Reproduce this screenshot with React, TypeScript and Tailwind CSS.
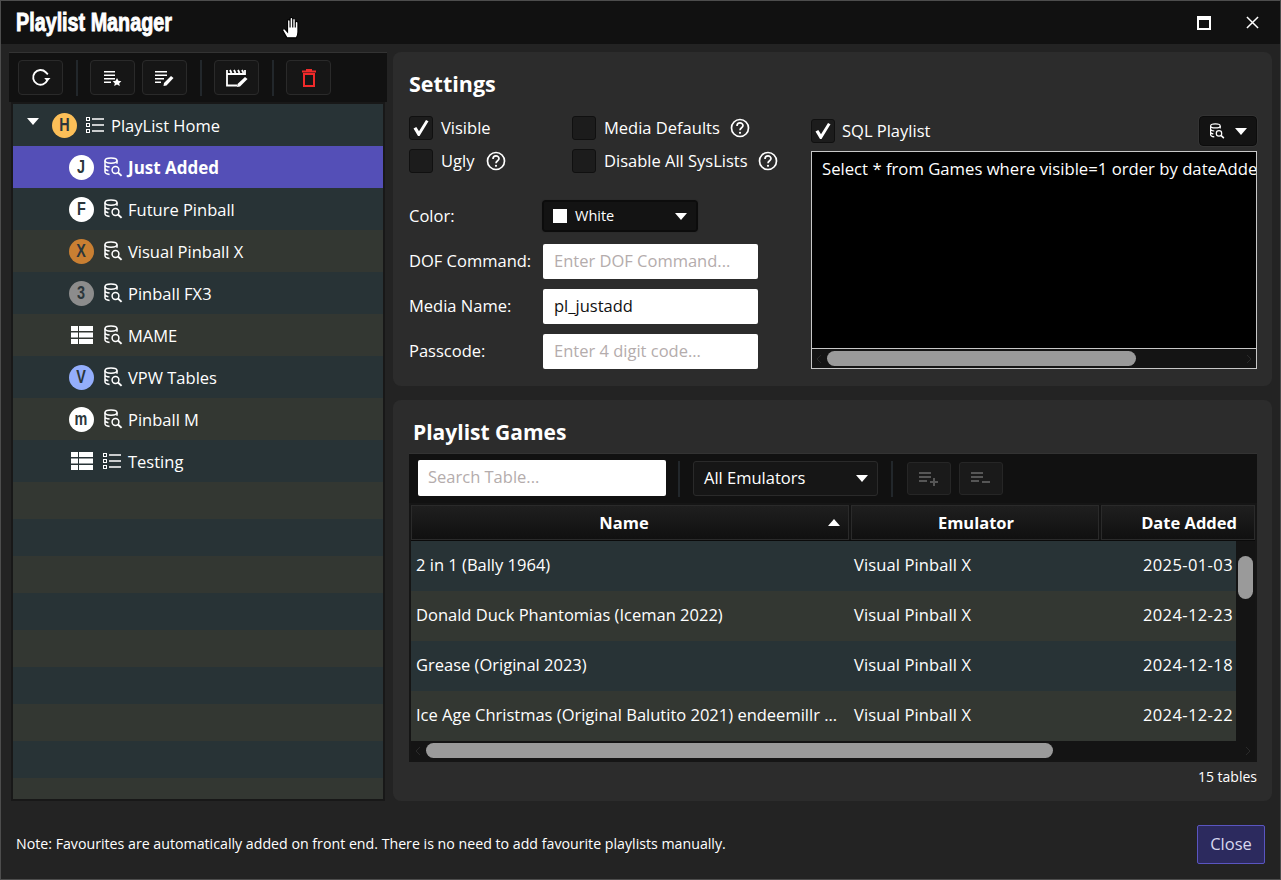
import React from 'react';

const DbSearch: React.FC<{ className?: string }> = ({ className = 'w-[20px] h-[20px]' }) => (
  <svg viewBox="0 0 20 20" fill="none" stroke="currentColor" strokeWidth="1.5" className={className}>
    <ellipse cx="8" cy="3.6" rx="6" ry="2.6" />
    <path d="M2 3.6v11.2c0 1.4 2 2.4 4.6 2.6M14 3.6v3.2M2 7.5c0 1.4 2.2 2.4 4.6 2.5M2 11.3c0 1.2 1.6 2.1 3.4 2.4" />
    <circle cx="12.5" cy="13" r="3.4" />
    <path d="M15 15.5l3.6 3.4" strokeWidth="1.9" />
  </svg>
);

const ListBoxes: React.FC = () => (
  <svg viewBox="0 0 18 16" fill="none" stroke="currentColor" className="w-[18px] h-[16px]">
    <rect x="0.5" y="0.5" width="3" height="3" />
    <rect x="0.5" y="6.5" width="3" height="3" />
    <rect x="0.5" y="12.5" width="3" height="3" />
    <path d="M6 2h12M6 8h12M6 14h12" strokeWidth="1.6" />
  </svg>
);

const TableIcon: React.FC = () => (
  <svg viewBox="0 0 22 18" fill="currentColor" className="w-[22px] h-[18px]">
    <path d="M0 0h7v5H0zM8 0h14v5H8zM0 6.500h7v5H0zM8 6.500h14v5H8zM0 13h7v5H0zM8 13h14v5H8z" />
  </svg>
);

const Caret: React.FC<{ className?: string }> = ({ className = '' }) => (
  <svg viewBox="0 0 12 7" fill="currentColor" className={`w-[12px] h-[7px] ${className}`}>
    <path d="M0 0h12L6 7z" />
  </svg>
);

const Help: React.FC<{ className?: string }> = ({ className = 'ml-[2px]' }) => (
  <svg viewBox="0 0 20 20" fill="none" stroke="currentColor" className={`w-[20px] h-[20px] shrink-0 ${className}`}>
    <circle cx="10" cy="10" r="8.500" strokeWidth="1.700" />
    <path d="M7 8c0-4 6-4 6-.4 0 2.300-3 2-3 4.600" strokeWidth="1.700" />
    <circle cx="10" cy="14.800" r="1.100" fill="currentColor" stroke="none" />
  </svg>
);

const Check: React.FC<{ checked?: boolean }> = ({ checked }) => (
  <span className="w-[24px] h-[24px] rounded-[3px] bg-[#1c1c1c] border border-[#101010] flex items-center justify-center shrink-0">
    {checked && (
      <svg viewBox="0 0 18 18" fill="#fff" className="w-[18px] h-[18px]">
        <path d="M1.500 9.500l2.800-1.500 2.700 4.200L14 1l2.500 1.200L7.500 17h-1.500z" />
      </svg>
    )}
  </span>
);

const Field: React.FC<{ label: string; placeholder?: string; value?: string }> = ({ label, placeholder, value }) => (
  <div className="flex items-center h-[35px]">
    <span className="w-[134px] text-[16.500px]">{label}</span>
    <div className={`w-[215px] h-[35px] bg-white rounded-[2px] px-[11px] flex items-center text-[16.500px] ${value ? 'text-[#111]' : 'text-[#b4acac]'}`}>
      {value ?? placeholder}
    </div>
  </div>
);

const ToolButton: React.FC<{ children: React.ReactNode }> = ({ children }) => (
  <button className="w-[45px] h-[35px] rounded-[4px] bg-[#161616] border border-[#2a2a2a] flex items-center justify-center text-white">
    {children}
  </button>
);

const Sep: React.FC<{ className?: string }> = ({ className = 'ml-[13px] mr-[12px]' }) => (
  <span className={`w-[2px] h-[36px] bg-[#22272b] shrink-0 ${className}`} />
);

const HBar: React.FC<{ thumbLeft: number; thumbWidth: number; className?: string }> = ({ thumbLeft, thumbWidth, className = '' }) => (
  <div className={`h-[19px] bg-[#141414] flex items-center relative ${className}`}>
    <svg viewBox="0 0 6 10" fill="none" stroke="#2a2a2a" className="absolute left-[4px] w-[6px] h-[10px]"><path d="M5 1L1 5l4 4" /></svg>
    <div className="h-[15px] rounded-full bg-[#9a9a9a]" style={{ marginLeft: thumbLeft, width: thumbWidth }} />
    <svg viewBox="0 0 6 10" fill="none" stroke="#2a2a2a" className="absolute right-[4px] w-[6px] h-[10px]"><path d="M1 1l4 4-4 4" /></svg>
  </div>
);

interface TreeItem {
  name: string;
  badge: string | null;
  color: string;
  plain?: boolean;
}

const items: TreeItem[] = [
  { name: 'Future Pinball', badge: 'F', color: 'bg-white' },
  { name: 'Visual Pinball X', badge: 'X', color: 'bg-[#c97f32]' },
  { name: 'Pinball FX3', badge: '3', color: 'bg-[#8c8c8c]' },
  { name: 'MAME', badge: null, color: '' },
  { name: 'VPW Tables', badge: 'V', color: 'bg-[#94aefc]' },
  { name: 'Pinball M', badge: 'm', color: 'bg-white' },
  { name: 'Testing', badge: null, color: '', plain: true },
];

const games = [
  ['2 in 1 (Bally 1964)', '2025-01-03'],
  ['Donald Duck Phantomias (Iceman 2022)', '2024-12-23'],
  ['Grease (Original 2023)', '2024-12-18'],
  ['Ice Age Christmas (Original Balutito 2021) endeemillr ...', '2024-12-22'],
];

const Badge: React.FC<{ letter: string; color: string }> = ({ letter, color }) => (
  <span className={`w-[25px] h-[25px] rounded-full flex items-center justify-center text-[#2b363b] text-[18px] font-bold font-['Liberation_Sans',sans-serif] shrink-0 ${color}`}>
    <span className="scale-x-[0.8]">{letter}</span>
  </span>
);

const App: React.FC = () => {
  return (
    <div className="w-[1281px] h-[880px] relative overflow-hidden bg-[#232323] border border-[#4d4d4d] text-white font-['Open_Sans',sans-serif] flex flex-col">
      {/* title bar */}
      <div className="h-[43px] bg-[#111111] flex items-center shrink-0 pl-[15px]">
        <span className="font-['Liberation_Sans',sans-serif] font-bold text-[25px] [-webkit-text-stroke:0.9px_white] origin-left scale-x-[0.79] whitespace-nowrap">Playlist Manager</span>
        <div className="ml-auto flex items-center">
          <span className="w-[14px] h-[14px] border-2 border-white border-t-[4px] mr-[35px]" />
          <svg viewBox="0 0 14 14" stroke="#fff" strokeWidth="1.600" className="w-[13px] h-[13px] mr-[21px]">
            <path d="M1 1l12 12M13 1L1 13" />
          </svg>
        </div>
      </div>

      <svg viewBox="3 2 15 19" fill="#fff" stroke="#000" strokeWidth="1" className="absolute left-[281px] top-[16px] w-[18px] h-[22px]">
        <path d="M7 20L3.500 14c-.8-1.400 1-2.500 2-1.300L7.500 15V5.500c0-1.600 2.200-1.600 2.200 0V11V3.500c0-1.600 2.300-1.600 2.300 0V11V4.500c0-1.600 2.200-1.600 2.200 0V11V7c0-1.600 2.300-1.600 2.300 0v8c0 3-1 4-1.500 5z" />
      </svg>

      <div className="flex h-[758px] pt-[8px] shrink-0">
        {/* left column */}
        <div className="w-[378px] ml-[8px] flex flex-col shrink-0">
          <div className="h-[50px] bg-[#111111] border-t border-[#333333] flex items-center pl-[9px] shrink-0">
            <ToolButton>
              <svg viewBox="0 0 20 20" fill="none" stroke="currentColor" strokeWidth="1.800" className="w-[21px] h-[21px]">
                <path d="M16.500 12.500a7 7 0 1 1-1.500-7.500l2 2" />
                <path d="M13.500 10.500h6l-3 3.300z" fill="currentColor" stroke="none" />
              </svg>
            </ToolButton>
            <Sep />
            <ToolButton>
              <svg viewBox="0 0 18 16" fill="currentColor" className="w-[18px] h-[16px]">
                <path d="M0 1h11v1.500H0zM0 4.500h11V6H0zM0 8h11v1.500H0zM0 11.500h7V13H0z" />
                <path d="M13 8l1.400 2.800 3 .4-2.200 2 .6 2.800-2.800-1.500-2.800 1.500.6-2.800-2.200-2 3-.4z" />
              </svg>
            </ToolButton>
            <span className="w-[7px]" />
            <ToolButton>
              <svg viewBox="0 0 20 16" fill="currentColor" className="w-[20px] h-[16px]">
                <path d="M0 1h12v1.500H0zM0 4.500h12V6H0zM0 8h9v1.500H0zM0 11.500h6V13H0z" />
                <path d="M16 6l2.500 2-7 7.500-3 .5.500-3z" />
              </svg>
            </ToolButton>
            <Sep />
            <ToolButton>
              <svg viewBox="0 0 22 18" fill="none" stroke="currentColor" className="w-[22px] h-[18px]">
                <path d="M1 1v15.500h10M1 5h18V1" strokeWidth="1.800" />
                <path d="M4 1l1.500 3M8 1l1.500 3M12 1l1.500 3M16 1l1.500 3" strokeWidth="1.800" />
                <path d="M19 8l2.500 2-7.500 7.500-3 .5.500-3z" fill="currentColor" stroke="none" />
              </svg>
            </ToolButton>
            <Sep />
            <ToolButton>
              <svg viewBox="0 0 14 18" fill="none" stroke="#f02a2a" strokeWidth="2" className="w-[14px] h-[18px]">
                <path d="M0 2.500h14M4 1h6" />
                <path d="M2 5h10v12H2z" />
              </svg>
            </ToolButton>
          </div>

          <div className="h-[699px] mx-[2px] bg-[#1a1a1a] border-2 border-[#181818] flex flex-col overflow-hidden">
            <div className="h-[42px] bg-[#283336] flex items-center pl-[14px] text-[16.500px] shrink-0">
              <Caret className="mb-[8px]" />
              <span className="w-[13px]" />
              <Badge letter="H" color="bg-[#fcbf58]" />
              <span className="w-[9px]" />
              <ListBoxes />
              <span className="w-[7px]" />
              <span className="pt-[2px]">PlayList Home</span>
            </div>
            <div className="h-[42px] bg-[#544fb7] flex items-center pl-[56px] text-[17px] font-bold shrink-0">
              <Badge letter="J" color="bg-white" />
              <span className="w-[9px]" />
              <DbSearch />
              <span className="w-[5px]" />
              <span className="pt-[2px]">Just Added</span>
            </div>
            {items.map((it, i) => (
              <div key={it.name} className={`h-[42px] flex items-center pl-[56px] text-[16.500px] shrink-0 ${i % 2 === 0 ? 'bg-[#283336]' : 'bg-[#333732]'}`}>
                {it.badge ? <Badge letter={it.badge} color={it.color} /> : <span className="w-[25px] flex justify-center"><TableIcon /></span>}
                <span className="w-[9px]" />
                {it.plain ? <ListBoxes /> : <DbSearch />}
                <span className={it.plain ? 'w-[7px]' : 'w-[5px]'} />
                <span className="pt-[2px]">{it.name}</span>
              </div>
            ))}
            {[0, 1, 2, 3, 4, 5, 6, 7, 8].map((i) => (
              <div key={i} className={`h-[37px] shrink-0 ${i % 2 === 0 ? 'bg-[#333732]' : 'bg-[#283336]'}`} />
            ))}
          </div>
        </div>

        {/* right column */}
        <div className="w-[879px] ml-[6px] flex flex-col gap-[14px] shrink-0">
          <section className="h-[334px] rounded-[8px] bg-[#2c2c2c] pl-[16px] pr-[15px] pt-[16px] flex gap-[32px]">
            <div className="w-[370px] shrink-0">
              <h2 className="text-[21.500px] font-bold leading-[30px] pt-[1px] h-[30px]">Settings</h2>
              <div className="mt-[18px] flex flex-col gap-[9px] text-[16.500px]">
                <div className="flex items-center h-[24px]">
                  <div className="w-[163px] flex items-center gap-[8px]"><Check checked />Visible</div>
                  <div className="flex items-center gap-[8px] whitespace-nowrap"><Check />Media Defaults<Help /></div>
                </div>
                <div className="flex items-center h-[24px]">
                  <div className="w-[163px] flex items-center gap-[8px]"><Check />Ugly<Help className="ml-[4px]" /></div>
                  <div className="flex items-center gap-[8px] whitespace-nowrap"><Check />Disable All SysLists<Help /></div>
                </div>
              </div>
              <div className="flex items-center h-[32px] mt-[27px]">
                <span className="w-[133px] text-[16.500px]">Color:</span>
                <div className="w-[156px] h-[32px] rounded-[3px] bg-[#131313] border-2 border-[#0c0c0c] outline outline-[#2a2a2a] flex items-center pl-[9px] pr-[8px] text-[14.500px]">
                  <span className="w-[14px] h-[14px] bg-white mr-[8px]" />
                  White
                  <Caret className="ml-auto mr-[1px]" />
                </div>
              </div>
              <div className="mt-[12px] flex flex-col gap-[10px]">
                <Field label="DOF Command:" placeholder="Enter DOF Command..." />
                <Field label="Media Name:" value="pl_justadd" />
                <Field label="Passcode:" placeholder="Enter 4 digit code..." />
              </div>
            </div>
            <div className="w-[446px] shrink-0 flex flex-col">
              <div className="h-[30px] mt-[48px] flex items-center gap-[7px] text-[16.500px]">
                <Check checked />SQL Playlist
                <div className="ml-auto w-[58px] h-[30px] rounded-[4px] bg-[#131313] border border-[#0c0c0c] outline outline-[#333] flex items-center justify-center gap-[10px]">
                  <DbSearch className="w-[16px] h-[16px]" />
                  <Caret />
                </div>
              </div>
              <div className="mt-[5px] h-[218px] w-[446px] border border-[#c8c8c8] flex flex-col bg-black overflow-hidden">
                <div className="h-[197px] border-b border-[#c8c8c8] pl-[10px] pt-[4px] text-[16.700px] whitespace-nowrap shrink-0">
                  Select * from Games where visible=1 order by dateAdde
                </div>
                <HBar thumbLeft={15} thumbWidth={309} />
              </div>
            </div>
          </section>

          <section className="h-[401px] rounded-[8px] bg-[#2c2c2c] px-[16px] pt-[16px] flex flex-col">
            <h2 className="text-[21px] font-bold leading-[30px] pl-[4px] pt-[1px]">Playlist Games</h2>
            <div className="w-[848px] h-[50px] mt-[6px] bg-[#111111] border-t border-[#333333] flex items-center pl-[9px] shrink-0">
              <div className="w-[248px] h-[36px] mb-[2px] bg-white rounded-[2px] px-[10px] flex items-center text-[16.500px] text-[#b4acac]">Search Table...</div>
              <Sep className="ml-[12px] mr-[13px]" />
              <div className="w-[185px] h-[35px] rounded-[3px] bg-[#161616] border border-[#2a2a2a] flex items-center pl-[10px] pr-[9px] text-[16.500px]">
                All Emulators
                <Caret className="ml-auto" />
              </div>
              <Sep className="ml-[13px] mr-[14px]" />
              <button className="w-[44px] h-[33px] rounded-[3px] bg-[#1a1a1a] border border-[#262626] flex items-center justify-center text-[#565656]">
                <svg viewBox="0 0 20 14" fill="currentColor" className="w-[20px] h-[14px]"><path d="M0 0h12v2H0zM0 4h12v2H0zM0 8h8v2H0zM14 6h2v3h3v2h-3v3h-2v-3h-3V9h3z" /></svg>
              </button>
              <span className="w-[8px]" />
              <button className="w-[44px] h-[33px] rounded-[3px] bg-[#1a1a1a] border border-[#262626] flex items-center justify-center text-[#565656]">
                <svg viewBox="0 0 20 14" fill="currentColor" className="w-[20px] h-[14px]"><path d="M0 0h12v2H0zM0 4h12v2H0zM0 8h8v2H0zM11 9h8v2h-8z" /></svg>
              </button>
            </div>
            <div className="w-[848px] h-[259px] bg-[#131313] border-2 border-[#151515] flex flex-col overflow-hidden">
              <div className="h-[36px] flex gap-[2px] text-[16.500px] font-bold shrink-0 border-b border-[#0a0a0a]">
                <div className="w-[438px] bg-gradient-to-b from-[#1f1f1f] to-[#101010] border border-[#2a2a2a] flex items-center justify-center relative pr-[12px]">
                  <span className="pt-[1px]">Name</span>
                  <Caret className="absolute right-[8px] rotate-180" />
                </div>
                <div className="w-[248px] bg-gradient-to-b from-[#1f1f1f] to-[#101010] border border-[#2a2a2a] flex items-center justify-center pl-[2px]">
                  <span className="pt-[1px]">Emulator</span>
                </div>
                <div className="flex-1 bg-gradient-to-b from-[#1f1f1f] to-[#101010] border border-[#2a2a2a] flex items-center justify-end pr-[17px]">
                  <span className="pt-[1px]">Date Added</span>
                </div>
              </div>
              <div className="flex h-[200px] shrink-0">
                <div className="w-[825px] shrink-0">
                  {games.map(([name, date], i) => (
                    <div key={name} className={`h-[50px] flex items-center pb-[2px] text-[16.500px] whitespace-nowrap ${i % 2 === 0 ? 'bg-[#283336]' : 'bg-[#333732]'}`}>
                      <span className="w-[443px] pl-[5px] shrink-0">{name}</span>
                      <span className="w-[280px] shrink-0 tracking-[0.12px]">Visual Pinball X</span>
                      <span className="ml-auto pr-[3px] tracking-[0.4px]">{date}</span>
                    </div>
                  ))}
                </div>
                <div className="flex-1 bg-[#141414] pt-[15px] flex justify-center">
                  <div className="w-[15px] h-[43px] rounded-full bg-[#9a9a9a]" />
                </div>
              </div>
              <HBar thumbLeft={15} thumbWidth={627} />
            </div>
            <p className="text-right text-[14px] mt-[4px] w-[848px]">15 tables</p>
          </section>
        </div>
      </div>

      {/* footer */}
      <div className="flex-1 flex items-center pl-[15px] pr-[15px] pt-[6px] text-[14.200px]">
        Note: Favourites are automatically added on front end. There is no need to add favourite playlists manually.
        <button className="ml-auto w-[68px] h-[39px] bg-[#2c2a5e] border border-[#5a55c0] rounded-[2px] text-[16.500px] text-[#d8d8ee] mt-[1px]">Close</button>
      </div>
    </div>
  );
};

export default App;
